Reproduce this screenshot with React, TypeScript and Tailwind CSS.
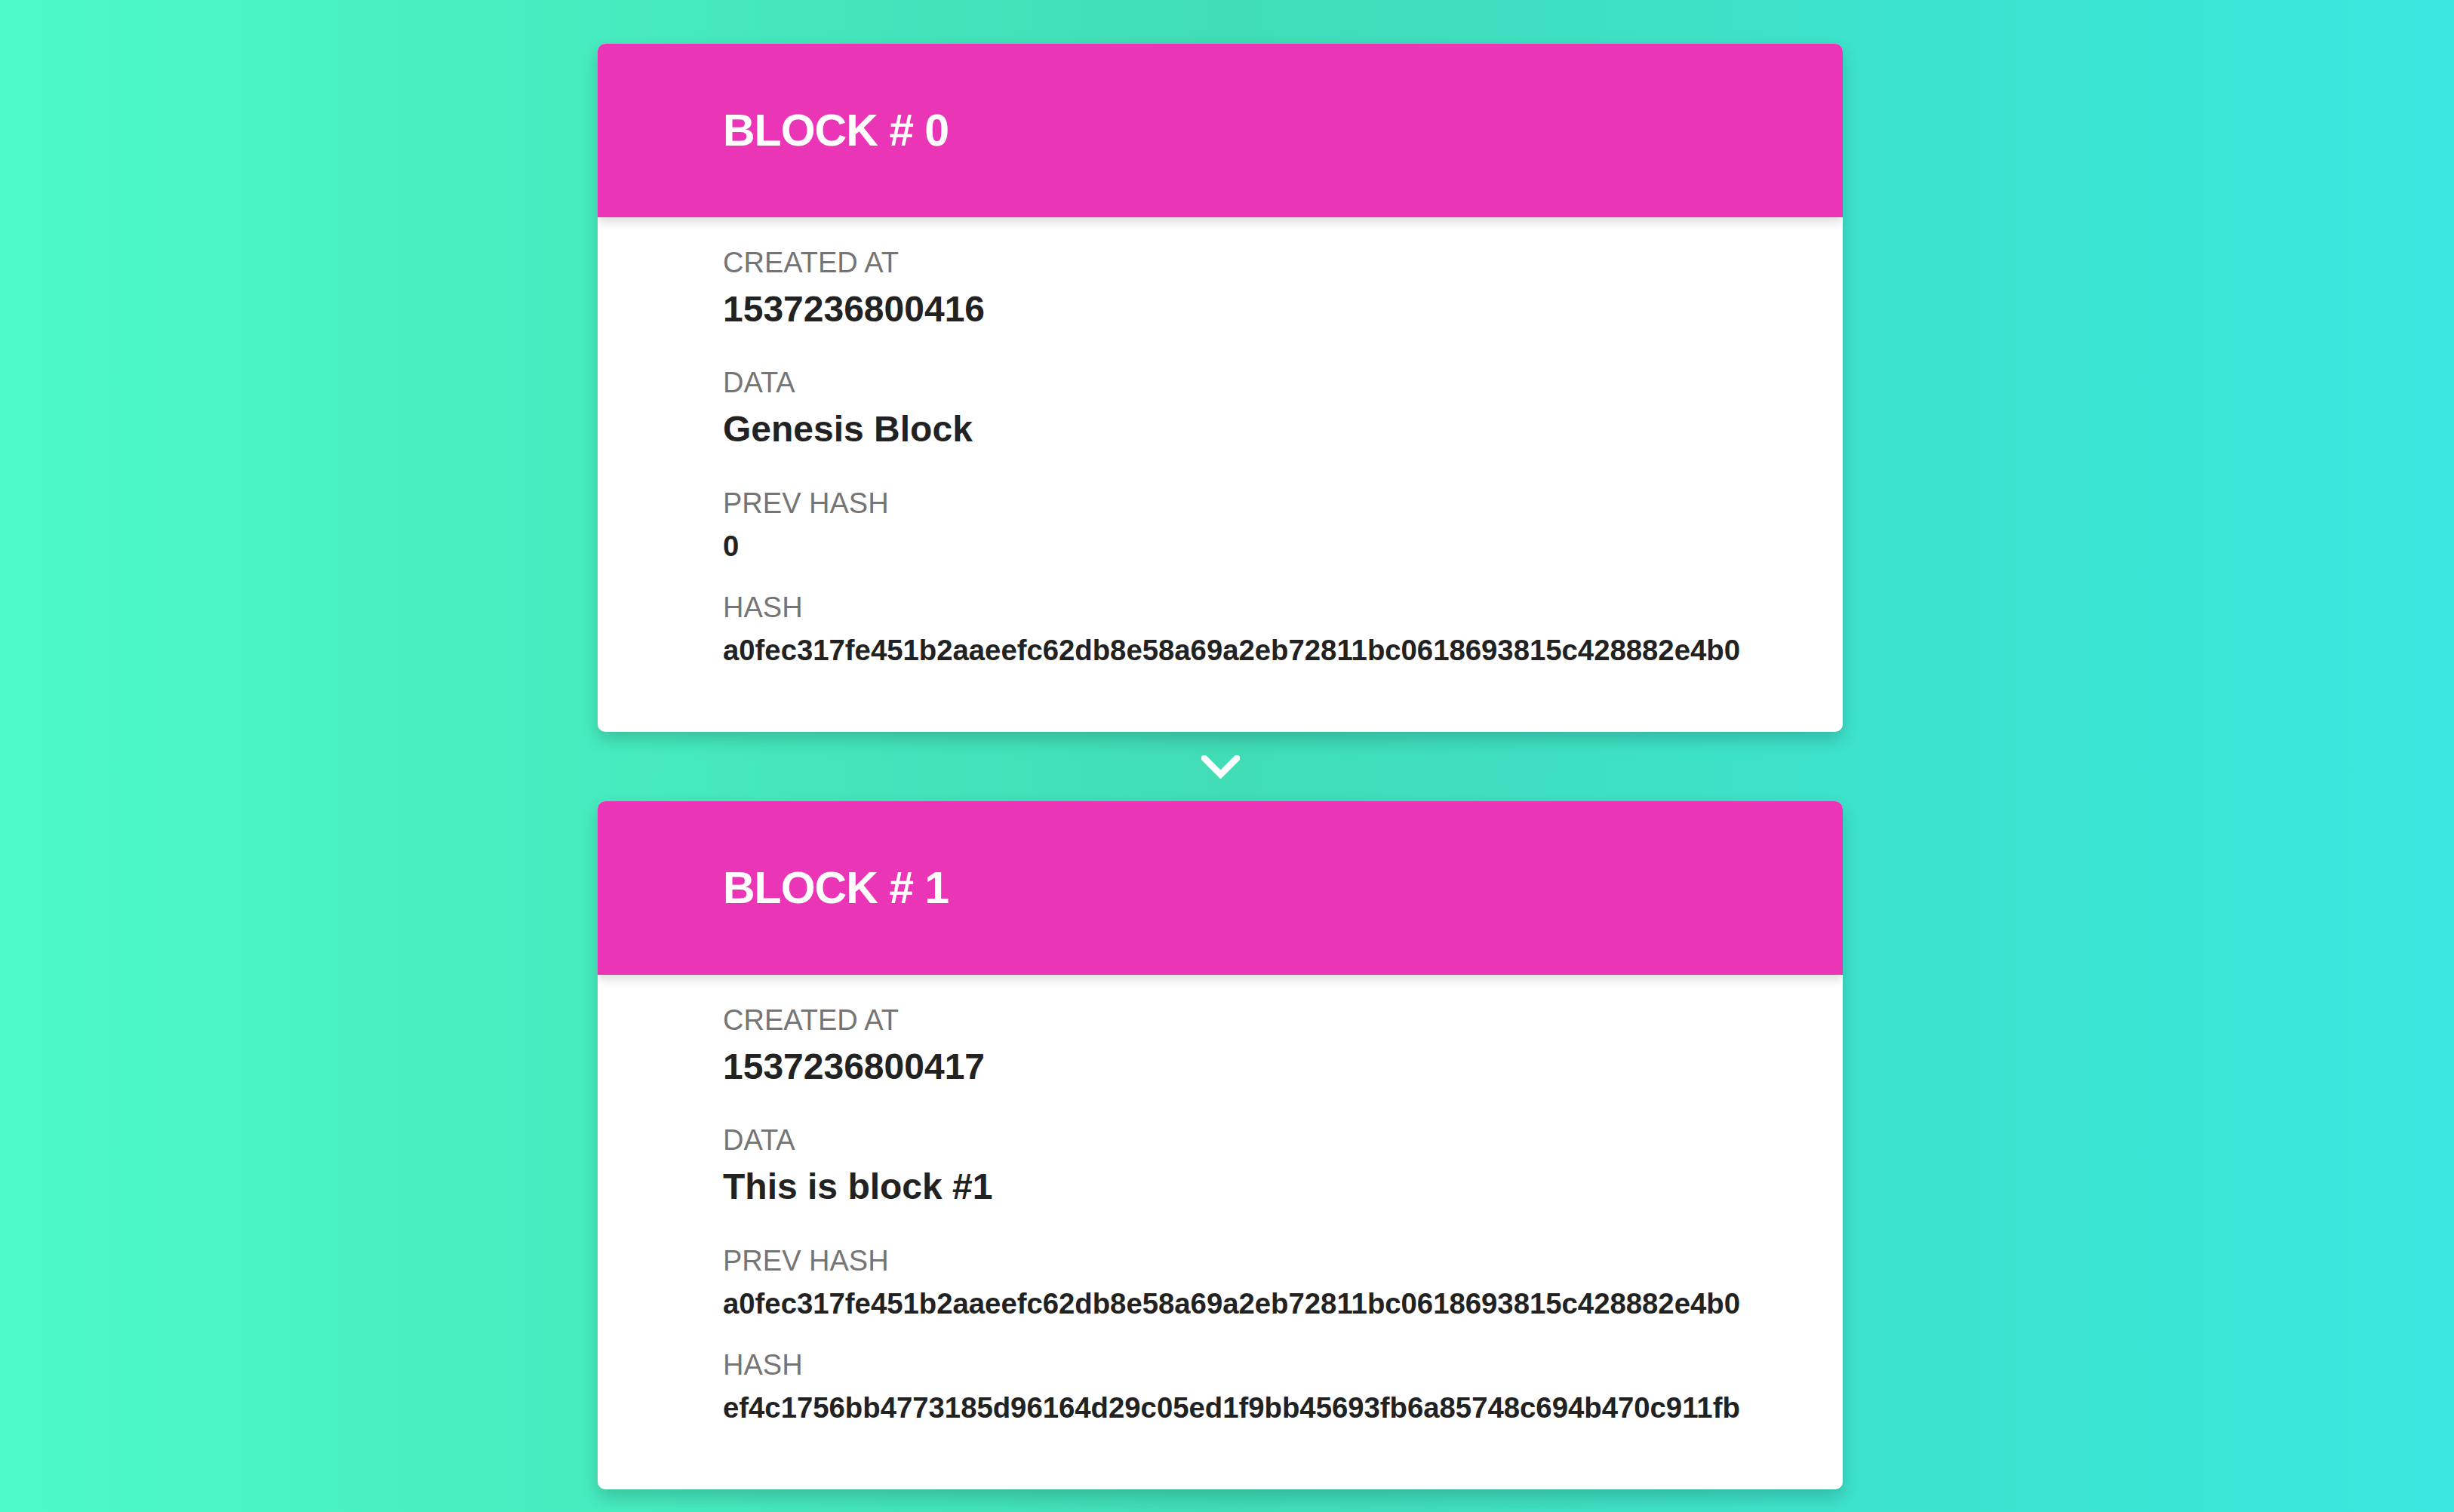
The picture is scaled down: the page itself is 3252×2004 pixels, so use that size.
const blocks = [
  {
    index: 0,
    createdAt: "1537236800416",
    data: "Genesis Block",
    prevHash: "0",
    hash: "a0fec317fe451b2aaeefc62db8e58a69a2eb72811bc0618693815c428882e4b0",
  },
  {
    index: 1,
    createdAt: "1537236800417",
    data: "This is block #1",
    prevHash: "a0fec317fe451b2aaeefc62db8e58a69a2eb72811bc0618693815c428882e4b0",
    hash: "ef4c1756bb4773185d96164d29c05ed1f9bb45693fb6a85748c694b470c911fb",
  },
];

type Block = (typeof blocks)[number];

function Label({ children }: { children: React.ReactNode }) {
  return (
    <div className="text-[38px] leading-[46px] text-[#757575]">{children}</div>
  );
}

function BlockCard({ block }: { block: Block }) {
  return (
    <div className="w-[1650px] overflow-hidden rounded-[10px] bg-white shadow-[0_10px_22px_rgba(0,0,0,0.18)]">
      <div className="relative z-10 flex h-[230px] items-center bg-[#ea36b6] pl-[166px] shadow-[0_6px_12px_rgba(0,0,0,0.14)]">
        <h2 className="text-[59px] font-bold leading-none tracking-[-1px] text-white">
          BLOCK # {block.index}
        </h2>
      </div>
      <div className="pb-[85px] pl-[166px] pt-[37px] text-[#222222]">
        <Label>CREATED AT</Label>
        <div className="mt-[11px] text-[48px] font-bold leading-[56px]">
          {block.createdAt}
        </div>

        <div className="mt-[46px]">
          <Label>DATA</Label>
        </div>
        <div className="mt-[11px] text-[48px] font-bold leading-[56px]">
          {block.data}
        </div>

        <div className="mt-[47px]">
          <Label>PREV HASH</Label>
        </div>
        <div className="mt-[11px] text-[38.3px] font-bold leading-[46px]">
          {block.prevHash}
        </div>

        <div className="mt-[35px]">
          <Label>HASH</Label>
        </div>
        <div className="mt-[11px] text-[38.3px] font-bold leading-[46px]">
          {block.hash}
        </div>
      </div>
    </div>
  );
}

export default function App() {
  return (
    <div className="min-h-screen bg-gradient-to-r from-[#4dfac7] via-[#40ddb7] to-[#3ae8df] font-['Liberation_Sans',Arial,sans-serif]">
      <div className="flex flex-col items-center pr-[18px] pt-[58px] pb-[40px]">
        {blocks.map((block, i) => (
          <div key={block.index} className="flex flex-col items-center">
            {i > 0 && (
              <svg
                width="51"
                height="31"
                viewBox="0 0 51 31"
                className="mb-[30px] mt-[31px]"
                fill="none"
              >
                <polyline
                  points="4,4 25.5,25.5 47,4"
                  stroke="white"
                  strokeWidth="8.5"
                  strokeLinecap="square"
                />
              </svg>
            )}
            <BlockCard block={block} />
          </div>
        ))}
      </div>
    </div>
  );
}
